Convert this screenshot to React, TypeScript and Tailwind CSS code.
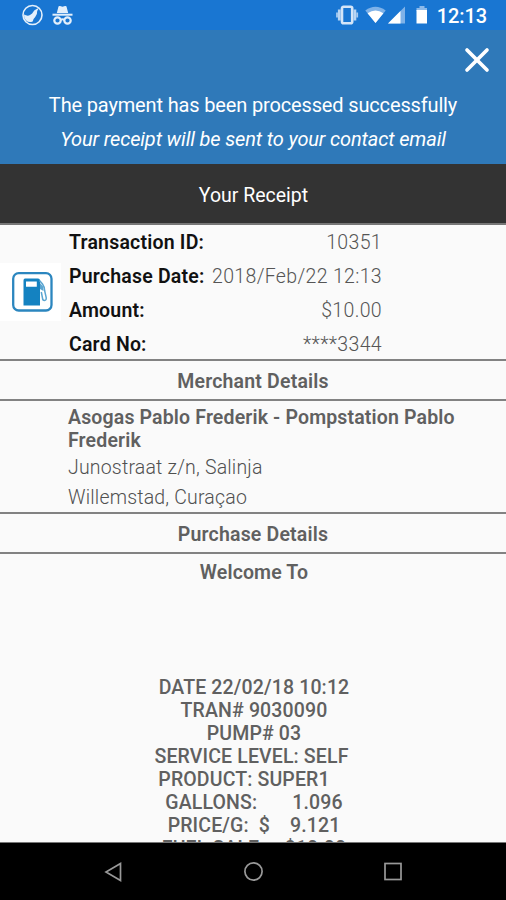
import { X } from "lucide-react";

const details = [
  { label: "Transaction ID:", value: "10351" },
  { label: "Purchase Date:", value: "2018/Feb/22 12:13" },
  { label: "Amount:", value: "$10.00" },
  { label: "Card No:", value: "****3344" },
];

const receiptLines = [
  "DATE 22/02/18 10:12",
  "TRAN# 9030090",
  "PUMP# 03",
  "SERVICE LEVEL: SELF ",
  "PRODUCT: SUPER1    ",
  "GALLONS:       1.096",
  "PRICE/G:  $    9.121",
  "FUEL SALE:    $10.00",
];

function StatusBar() {
  return (
    <div className="flex h-[30px] shrink-0 items-center bg-[#1976d2] text-white">
      <svg className="ml-[21px] h-[22px] w-[23px]" viewBox="0 0 23 22" fill="none">
        <circle cx="11.5" cy="11" r="9.5" stroke="#e3effb" strokeWidth="1.6" />
        <path d="M3 10.5q3.500 2 6 .5 2.500-1.500 3.500-3.500T18 4l-1.800 3q.3 3.500-2 6-2.200 2-2.500 4.500-4 1.500-6.500-1Q2.500 14 3 10.500Z" fill="#e3effb" />
      </svg>
      <svg className="ml-[8px] h-[22px] w-[21px]" viewBox="0 0 21 22" fill="none">
        <path d="M4.800 9 6.500 2.500Q6.800 1.700 8 2l2.500.7 2.500-.7q1.200-.3 1.500.5L16.200 9Z" fill="#e3effb" />
        <path d="M.5 9.700h20v2H.5z" fill="#e3effb" />
        <circle cx="5.500" cy="16.500" r="3.200" stroke="#e3effb" strokeWidth="2.200" />
        <circle cx="15.500" cy="16.500" r="3.200" stroke="#e3effb" strokeWidth="2.200" />
        <path d="M8.500 16q2-1.400 4 0" stroke="#e3effb" strokeWidth="2" />
      </svg>
      <svg className="ml-auto h-[22px] w-[24px]" viewBox="0 0 24 22" fill="none">
        <rect x="7" y="2.800" width="10.200" height="16.500" rx="1.500" stroke="#d4e5f8" strokeWidth="2.600" />
        <path d="M4.300 5.500v11M19.900 5.500v11" stroke="#b9d5f3" strokeWidth="2.800" />
        <path d="M2 8.500v5M22.200 8.500v5" stroke="#a8cbf0" strokeWidth="1.800" />
      </svg>
      <svg className="ml-[6px] h-[18px] w-[21px]" viewBox="0 0 21 18">
        <path d="M10.500 17 .3 4.500Q10.500-3 20.700 4.500Z" fill="#7fb2e8" />
        <path d="M10.500 17 2.600 7.300Q10.500 1.500 18.400 7.300Z" fill="#fff" />
      </svg>
      <svg className="ml-[2px] h-[18px] w-[18px]" viewBox="0 0 18 18">
        <path d="M0 17.500 17 .5v17Z" fill="#7fb2e8" />
        <path d="M0 17.500 12.500 5v12.500Z" fill="#fff" />
      </svg>
      <svg className="ml-[10px] h-[20px] w-[12px]" viewBox="0 0 12 20">
        <path d="M3.500 1h5v2H11v3H.5V3h3Z" fill="#8dbaea" />
        <path d="M.5 5H11v13.500H.5Z" fill="#fff" />
      </svg>
      <span className="mr-[19px] ml-[9px] pt-[2px] text-[20px] leading-[30px] font-medium tracking-[-0.1px] whitespace-nowrap">
        12:13
      </span>
    </div>
  );
}

function FuelIcon() {
  return (
    <svg className="h-[40px] w-[41px]" viewBox="0 0 41 40" fill="none">
      <rect x="1.200" y="1.200" width="38.300" height="37.300" rx="5.500" fill="#fff" stroke="#2b86bf" strokeWidth="2.300" />
      <path
        d="M13 6.500h13q2 0 2 2V33.500H11.500V8.500q0-2 1.500-2Zm1 3v5.300h10.800V9.500Z"
        fill="#1482c1"
        fillRule="evenodd"
      />
      <path
        d="m27.500 8.500 3 3.500q2.200 3 2.200 7l1.500 6.500q.3 3-1.700 3T30.500 26l-1.200-6"
        stroke="#5aa5d1"
        strokeWidth="1.500"
      />
      <path d="M28 11 31.500 15v4l-3.500-2Z" fill="#5aa5d1" />
    </svg>
  );
}

function SectionTitle({ title }: { title: string }) {
  return (
    <h2 className="flex h-[42px] items-center justify-center border-y-2 border-[#828282] pt-[3px] text-[19.5px] font-semibold tracking-[0.18px] text-[#606060]">
      {title}
    </h2>
  );
}

export default function App() {
  return (
    <div className="flex h-[900px] w-[506px] flex-col overflow-hidden bg-[#fafafa] font-['Roboto',sans-serif]">
      <StatusBar />
      <header className="flex h-[134px] shrink-0 flex-col items-center bg-[#2f79b9] text-white">
        <button className="mt-[10px] mr-[9px] self-end" aria-label="Close">
          <X className="h-[40px] w-[40px]" strokeWidth={2.2} />
        </button>
        <p className="mt-[8px] text-[20px] leading-[34px] tracking-[-0.15px] whitespace-nowrap">
          The payment has been processed successfully
        </p>
        <p className="text-[20px] leading-[34px] tracking-[-0.14px] whitespace-nowrap italic">
          Your receipt will be sent to your contact email
        </p>
      </header>
      <h1 className="flex h-[61px] shrink-0 items-center justify-center border-b-2 border-[#777] bg-[#333] pt-[5px] pl-px text-[19.5px] text-white">
        Your Receipt
      </h1>

      <main className="flex-1 overflow-hidden">
        <section className="flex h-[134px]">
          <div className="mt-[38px] flex h-[58px] w-[61px] items-center justify-center bg-white pl-[3px]">
            <FuelIcon />
          </div>
          <dl className="ml-[8px] w-[313px] pt-px">
            {details.map((item) => (
              <div key={item.label} className="flex h-[34px] items-center justify-between whitespace-nowrap">
                <dt className="text-[19.5px] font-semibold tracking-[0.2px] text-[#111]">{item.label}</dt>
                <dd className="text-[19.5px] font-light tracking-[0.34px] text-[#555]">{item.value}</dd>
              </div>
            ))}
          </dl>
        </section>

        <SectionTitle title="Merchant Details" />
        <section className="h-[111px] pt-[5px] pl-[68px] text-[19.5px] text-[#606060]">
          <p className="w-[410px] leading-[23px] font-semibold tracking-[0.15px]">
            Asogas Pablo Frederik - Pompstation Pablo Frederik
          </p>
          <p className="mt-px leading-[30px] font-light tracking-[0.19px] text-[#505050]">Junostraat z/n, Salinja</p>
          <p className="leading-[30px] font-light tracking-[0.19px] text-[#505050]">Willemstad, Curaçao</p>
        </section>

        <SectionTitle title="Purchase Details" />
        <section className="pt-[7px] pl-[2px] text-center text-[19.5px] leading-[23px] font-medium tracking-[0.14px] text-[#606060]">
          <p className="font-semibold">Welcome To</p>
          <div className="mt-[92px]">
            {receiptLines.map((line) => (
              <p key={line} className="whitespace-pre">
                {line}
              </p>
            ))}
          </div>
        </section>
      </main>

      <nav className="flex h-[58px] shrink-0 items-center justify-between border-t border-[#777] bg-black px-[103px]">
        <svg className="h-[20px] w-[20px]" viewBox="0 0 20 20" fill="none" stroke="#999" strokeWidth="1.700">
          <path d="M17.500 1.500v17L3 10Z" />
        </svg>
        <svg className="h-[20px] w-[20px]" viewBox="0 0 20 20" fill="none" stroke="#999" strokeWidth="1.700">
          <circle cx="10.500" cy="9.500" r="8.600" />
        </svg>
        <svg className="h-[20px] w-[20px]" viewBox="0 0 20 20" fill="none" stroke="#999" strokeWidth="1.700">
          <rect x="2" y="1.500" width="16" height="16" />
        </svg>
      </nav>
    </div>
  );
}
